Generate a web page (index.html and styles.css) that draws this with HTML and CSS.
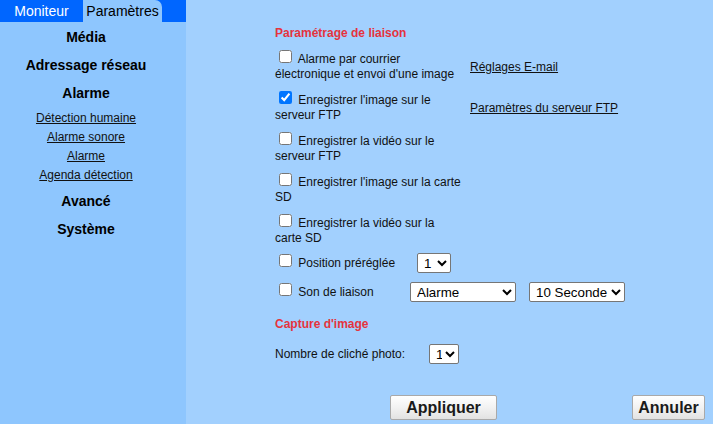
FILE: index.html
```html
<!DOCTYPE html>
<html lang="fr">
<head>
<meta charset="utf-8">
<title>Paramètres</title>
<link rel="stylesheet" href="styles.css">
</head>
<body>
<div class="page">
  <aside class="side">
    <div class="tabs">
      <div class="tab tab-mon">Moniteur</div>
      <div class="tab tab-par">Paramètres</div>
    </div>
    <nav class="nav">
      <div class="nav-h">Média</div>
      <div class="nav-h">Adressage réseau</div>
      <div class="nav-h">Alarme</div>
      <ul class="sub">
        <li><a href="#">Détection humaine</a></li>
        <li><a href="#">Alarme sonore</a></li>
        <li><a href="#">Alarme</a></li>
        <li><a href="#">Agenda détection</a></li>
      </ul>
      <div class="nav-h">Avancé</div>
      <div class="nav-h">Système</div>
    </nav>
  </aside>
  <main class="main">
    <h3 class="sec">Paramétrage de liaison</h3>
    <div class="opts">
      <div class="opt">
        <label class="chk"><input type="checkbox"> Alarme par courrier électronique et envoi d'une image</label>
        <a class="lnk" href="#">Réglages E-mail</a>
      </div>
      <div class="opt">
        <label class="chk"><input type="checkbox" checked> Enregistrer l'image sur le serveur FTP</label>
        <a class="lnk" href="#">Paramètres du serveur FTP</a>
      </div>
      <div class="opt">
        <label class="chk"><input type="checkbox"> Enregistrer la vidéo sur le serveur FTP</label>
      </div>
      <div class="opt">
        <label class="chk"><input type="checkbox"> Enregistrer l'image sur la carte SD</label>
      </div>
      <div class="opt">
        <label class="chk"><input type="checkbox"> Enregistrer la vidéo sur la carte SD</label>
      </div>
      <div class="row row-pos">
        <label class="chk lbl-pos"><input type="checkbox"> Position préréglée</label>
        <select class="sel sel-1"><option>1</option></select>
      </div>
      <div class="row row-son">
        <label class="chk lbl-son"><input type="checkbox"> Son de liaison</label>
        <select class="sel sel-alarm"><option>Alarme</option></select>
        <select class="sel sel-sec"><option>10 Seconde</option></select>
      </div>
    </div>
    <h3 class="sec sec-2">Capture d'image</h3>
    <div class="row row-shot">
      <span class="lbl-shot">Nombre de cliché photo:</span>
      <select class="sel sel-shot"><option>1</option></select>
    </div>
    <div class="actions">
      <button class="btn btn-apply">Appliquer</button>
      <button class="btn btn-cancel">Annuler</button>
    </div>
  </main>
</div>
</body>
</html>
```

FILE: styles.css
```css
html, body {
  margin: 0;
  padding: 0;
  height: 100%;
}
body {
  font-family: "Liberation Sans", Arial, sans-serif;
  font-size: 12px;
  color: #111;
  overflow: hidden;
}
.page {
  display: flex;
  height: 100vh;
}
.side {
  width: 186px;
  flex: none;
  background: #8ec6fe;
}
.tabs {
  display: flex;
  height: 22px;
  background: #0066ff;
}
.tab {
  font-size: 14px;
  line-height: 22px;
  text-align: center;
}
.tab-mon {
  width: 83px;
  color: #fff;
}
.tab-par {
  width: 79px;
  color: #000;
  background: #8ec6fe;
  border-top-right-radius: 7px;
}
.nav {
  padding: 1px 14px 0 0;
  text-align: center;
}
.nav-h {
  font-size: 14px;
  font-weight: bold;
  line-height: 28px;
  color: #000;
}
.sub {
  list-style: none;
  margin: 0;
  padding: 2px 0;
}
.sub li {
  line-height: 19px;
}
.sub a {
  color: #111;
  text-decoration: underline;
}
.main {
  flex: 1;
  background: #a2d0fe;
  padding: 26px 8px 0 89px;
}
.sec {
  margin: 0;
  font-size: 12px;
  font-weight: bold;
  line-height: 14px;
  color: #e5333d;
}
.opts {
  margin-top: 7px;
}
.opt {
  display: grid;
  grid-template-columns: 187px auto;
  column-gap: 8px;
  align-items: center;
  padding: 5px 0 6px;
}
.chk {
  line-height: 15px;
}
.chk input {
  margin: -3px 3px 0 4px;
  vertical-align: baseline;
}
.lnk {
  color: #111;
  text-decoration: underline;
}
.row {
  display: flex;
  align-items: center;
}
.row-pos {
  padding: 1px 0 4px;
}
.row-son {
  padding: 5px 0 3px;
}
.lbl-pos {
  width: 142px;
}
.lbl-son {
  width: 135px;
}
.sel {
  font-family: "Liberation Sans", Arial, sans-serif;
  font-size: 13.333px;
  height: 20px;
  border: 1px solid #767676;
  border-radius: 2px;
  background: #fff;
  color: #000;
  padding: 0 0 0 2px;
}
.sel-1 { width: 34px; }
.sel-alarm { width: 106px; }
.sel-sec { width: 96px; margin-left: 13px; }
.sec-2 {
  margin-top: 12px;
}
.row-shot {
  margin-top: 13px;
}
.lbl-shot {
  width: 154px;
}
.sel-shot { width: 30px; }
.actions {
  display: flex;
  justify-content: space-between;
  margin: 31px 0 0 115px;
}
.btn {
  font-family: "Liberation Sans", Arial, sans-serif;
  font-size: 16px;
  font-weight: bold;
  color: #1a1a1a;
  height: 25px;
  padding: 0;
  border: 1px solid #a9a9a9;
  border-radius: 2px;
  background: linear-gradient(#ffffff, #f2f2f2 50%, #e2e2e2);
}
.btn-apply { width: 107px; }
.btn-cancel { width: 73px; }
```
